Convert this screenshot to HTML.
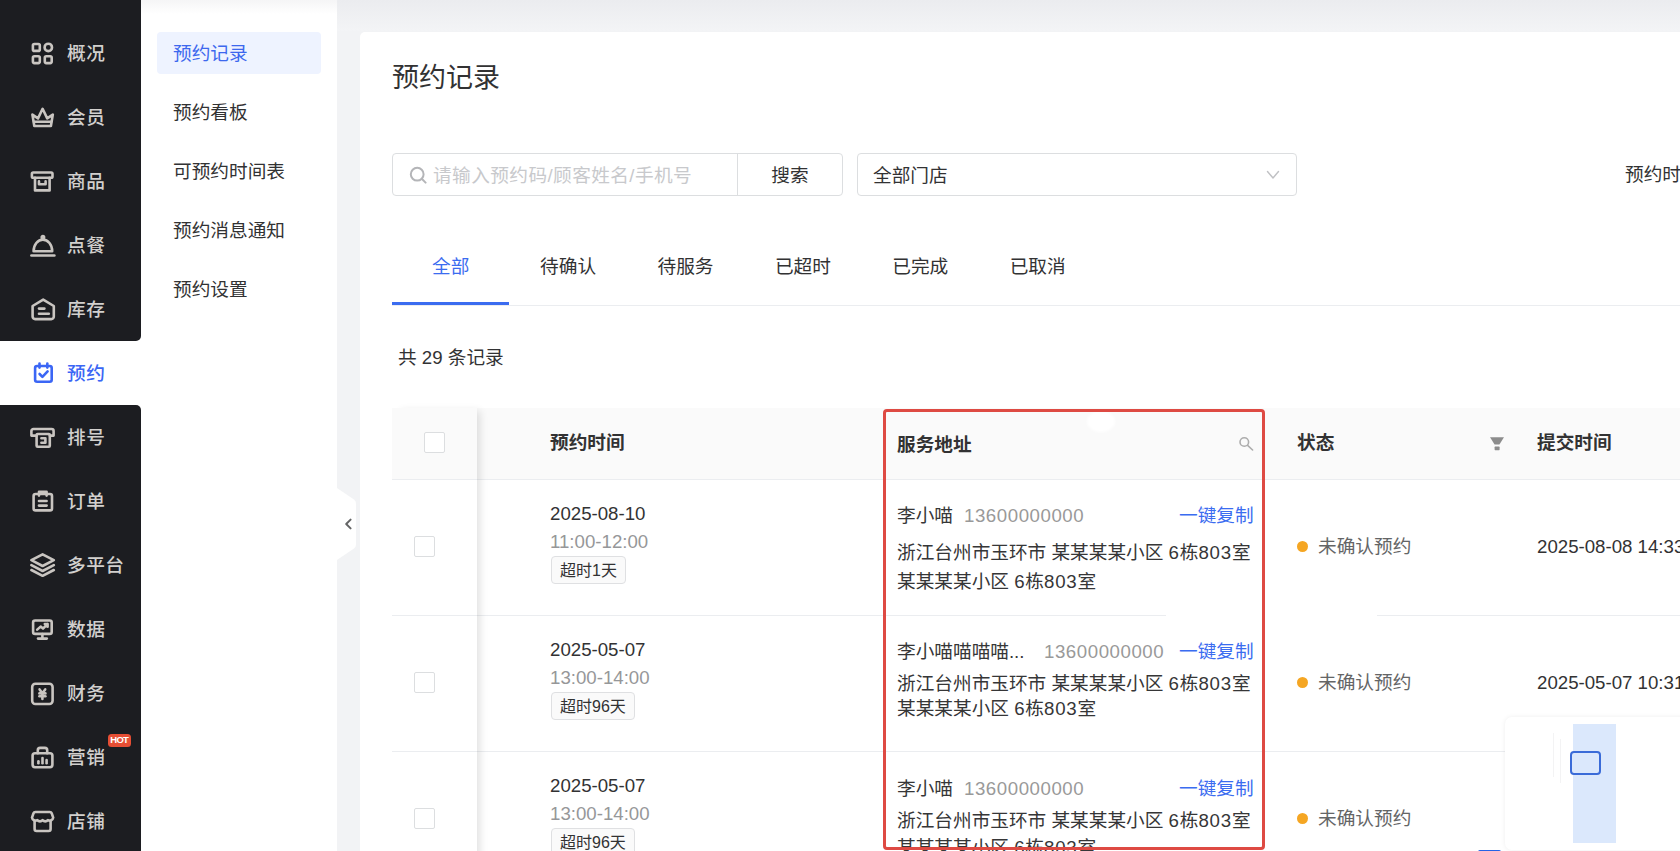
<!DOCTYPE html>
<html lang="zh-CN">
<head>
<meta charset="utf-8">
<title>预约记录</title>
<style>
*{box-sizing:border-box;margin:0;padding:0}
html,body{width:1680px;height:851px;overflow:hidden}
body{position:relative;background:#f2f3f5;font-family:"Liberation Sans","Noto Sans CJK SC",sans-serif;color:#323233;font-size:18.67px}
.abs{position:absolute}
/* primary sidebar */
#s1{position:absolute;left:0;top:0;width:141px;height:851px;background:#fff}
#s1 .dark{position:absolute;left:0;width:141px;background:#1c1d21}
#s1 .it{position:absolute;left:0;width:141px;height:64px;color:#d2d0ce;font-size:18.67px;line-height:66px;padding-left:67px;white-space:nowrap;letter-spacing:.5px;font-weight:500}
#s1 .it svg{position:absolute;left:30px;top:19px;width:26px;height:26px;fill:none;stroke:#c9c5c1;stroke-width:2.6;stroke-linecap:round;stroke-linejoin:round}
#s1 .it.on{color:#3b66f5}
#s1 .it.on svg{stroke:#3b66f5}
#s1 .hot{position:absolute;left:108px;top:734px;width:23px;height:13px;background:#e64e34;color:#fff;font-size:9.5px;font-weight:bold;line-height:12px;text-align:center;border-radius:3.5px;letter-spacing:-.7px;text-indent:-.5px}
/* secondary sidebar */
#s2{position:absolute;left:141px;top:0;width:196px;height:851px;background:linear-gradient(#f5f5f6,#fff 14px)}
#s2 .m{position:absolute;left:16px;width:164px;height:42px;line-height:44px;padding-left:16px;font-size:18.67px;color:#323233;border-radius:4px;white-space:nowrap;letter-spacing:0}
#s2 .m.on{background:#eef3ff;color:#3d68ee}
/* main */
#topbar{position:absolute;left:337px;top:0;width:1343px;height:31px;background:linear-gradient(#ebecef,#f3f4f6)}
#card{position:absolute;left:360px;top:32px;width:1340px;height:840px;background:#fff;border-radius:5px}

#card .title{position:absolute;left:32px;top:28px;font-size:27px;line-height:36px;color:#323233;letter-spacing:0}
.box{position:absolute;border:1px solid #dcdee0;border-radius:4px;background:#fff}
#search{left:392px;top:153px;width:451px;height:43px}
#search .div{position:absolute;left:344px;top:0;width:1px;height:41px;background:#dcdee0}
#search svg{position:absolute;left:16px;top:12px;width:18px;height:18px}
#search .ph{position:absolute;left:40px;top:1px;line-height:41px;color:#c8c9cc;font-size:18.67px;white-space:nowrap;letter-spacing:0.42px}
#search .btn{position:absolute;left:345px;top:1px;width:104px;line-height:41px;text-align:center;color:#323233}
#sel{left:857px;top:153px;width:440px;height:43px}
#sel .v{position:absolute;left:15px;top:1px;line-height:41px;color:#323233}
#sel svg{position:absolute;left:407px;top:13px;width:16px;height:16px}
.tab{position:absolute;top:247px;width:117.4px;height:40px;line-height:40px;text-align:center;color:#323233;font-size:18.67px}
.tab.on{color:#3b6cf0}
#tabline{position:absolute;left:392px;top:305px;width:1300px;height:1px;background:#ebedf0}
#tabink{position:absolute;left:392px;top:302px;width:117px;height:3px;background:#3b6cf0}
#count{position:absolute;left:398px;top:346px;line-height:24px;color:#323233}
/* table */
#thead{position:absolute;left:392px;top:408px;width:1300px;height:71px;background:#fafafa}
.rowline{position:absolute;left:392px;width:1300px;height:1px;background:#ebedf0}
#fixcol{position:absolute;left:392px;top:408px;width:85px;height:460px;box-shadow:6px 0 8px -3px rgba(0,0,0,.12)}
.cb{position:absolute;width:21px;height:21px;border:1px solid #dcdee0;border-radius:2px;background:#fff}
.th{position:absolute;top:431px;line-height:24px;font-weight:bold;color:#323233;white-space:nowrap}
.t1{position:absolute;left:550px;line-height:24px;color:#323233;white-space:nowrap}
.t2{position:absolute;left:550px;line-height:24px;color:#969799;white-space:nowrap}
.tag{position:absolute;left:551px;height:28px;line-height:28px;padding:0 8px;border:1px solid #dfe0e2;border-radius:4px;background:#fafafa;font-size:16px;color:#323233;white-space:nowrap}
.dot{position:absolute;left:1297px;width:11px;height:11px;border-radius:50%;background:#f5a623}
.st{position:absolute;left:1318px;line-height:24px;color:#646566;white-space:nowrap}
.sub{position:absolute;left:1537px;line-height:24px;color:#323233;white-space:nowrap}
/* address column (mock overlay) */
.ad{position:absolute;white-space:nowrap;color:#363637;font-family:"Liberation Sans","Noto Sans CJK SC",sans-serif;font-size:18.67px;line-height:26px}
.ad.g{color:#999;letter-spacing:.55px}
.ad i{font-style:normal;letter-spacing:.8px}
.ad.b{color:#3b6cf0}
#redbox{position:absolute;left:883px;top:409px;width:382px;height:441px;border:3px solid #de4a43;border-radius:4px}
#pop{position:absolute;left:1505px;top:717px;width:200px;height:133px;background:#fff;border-radius:7px;box-shadow:0 0 5px rgba(0,0,0,.07)}
</style>
</head>
<body>
<div id="s1">
  <div class="dark" style="top:0;height:341px;border-bottom-right-radius:5px"></div>
  <div class="dark" style="top:405px;height:446px;border-top-right-radius:5px"></div>
  <div class="it" style="top:21px"><svg viewBox="0 0 26 26"><rect x="2.9" y="4" width="6.9" height="6.9" rx="1.5"/><rect x="2.9" y="16.2" width="6.9" height="6.9" rx="1.5"/><rect x="14.8" y="16.2" width="6.9" height="6.9" rx="1.5"/><circle cx="18.3" cy="7.4" r="3.7"/></svg>概况</div>
  <div class="it" style="top:85px"><svg viewBox="0 0 26 26"><path d="M2.4 10.6 L8 14.4 L12.6 4.8 L17.2 14.4 L22.8 10.6 L20.9 22 H4.3 Z"/><path d="M4 17.8 H21.2"/></svg>会员</div>
  <div class="it" style="top:149px"><svg viewBox="0 0 26 26"><rect x="1.9" y="4.5" width="20.6" height="5.2" rx="1.3"/><path d="M5 9.7 V22.4 H19.6 V9.7"/><path d="M9 13.4 V16.2 H15.6 V13.4"/></svg>商品</div>
  <div class="it" style="top:213px"><svg viewBox="0 0 26 26"><path d="M3.6 19.2 a9.3 11.6 0 0 1 18.6 0 Z"/><circle cx="12.9" cy="5.2" r="1.2"/><path d="M1.4 23.5 H24.4"/></svg>点餐</div>
  <div class="it" style="top:277px"><svg viewBox="0 0 26 26"><path d="M2.6 10 L13.2 3.6 L23.8 10 V20.6 a2.5 2.5 0 0 1 -2.5 2.5 H5.1 a2.5 2.5 0 0 1 -2.5 -2.5 Z"/><path d="M9 12.6 H14.4"/><path d="M9 17.8 H18.8"/></svg>库存</div>
  <div class="it on" style="top:341px"><svg viewBox="0 0 26 26"><rect x="5.1" y="6" width="16.6" height="15.8" rx="2"/><path d="M9.5 3.6 V7.6"/><path d="M17.3 3.6 V7.6"/><path d="M9.6 14 L12.4 16.8 L17.6 11.4"/></svg>预约</div>
  <div class="it" style="top:405px"><svg viewBox="0 0 26 26"><path d="M6.4 11.6 H1.4 V7 a2 2 0 0 1 2 -2 H21.6 a2 2 0 0 1 2 2 V11.6 H19.8"/><rect x="6.6" y="10" width="13.2" height="12.8" rx="1"/><path d="M11.4 14.2 H15.4 V18.8 H11.4"/></svg>排号</div>
  <div class="it" style="top:469px"><svg viewBox="0 0 26 26"><rect x="3.6" y="6" width="18.4" height="16.4" rx="2"/><path d="M9 7.6 V3.8 H16.6 V7.6"/><path d="M9 13 H16.6"/><path d="M9 17.6 H16.6"/></svg>订单</div>
  <div class="it" style="top:533px"><svg viewBox="0 0 26 26"><path d="M12.6 2.4 L23.8 8.2 L12.6 14 L1.4 8.2 Z"/><path d="M1.4 13.2 L12.6 19 L23.8 13.2"/><path d="M1.4 18 L12.6 23.8 L23.8 18"/></svg>多平台</div>
  <div class="it" style="top:597px"><svg viewBox="0 0 26 26"><rect x="3.1" y="4.5" width="18.6" height="13.4" rx="2"/><path d="M12.4 18 V22.4"/><path d="M8 22.6 H16.8"/><path d="M7.2 13.6 L10.6 10.6 L13 12.6 L17.6 8 M14.8 8 H17.6 V10.8"/></svg>数据</div>
  <div class="it" style="top:661px"><svg viewBox="0 0 26 26"><rect x="2.2" y="3.8" width="20.4" height="20.2" rx="3.2"/><path d="M9.6 9.4 L12.4 13.2 L15.2 9.4"/><path d="M12.4 13.2 V19"/><path d="M9.4 13.4 H15.4"/><path d="M9.4 16.2 H15.4"/></svg>财务</div>
  <div class="it" style="top:725px"><svg viewBox="0 0 26 26"><rect x="2.6" y="9.2" width="19.8" height="14" rx="2.4"/><path d="M7.8 9.2 V6.2 a2.3 2.3 0 0 1 2.3 -2.3 h4.8 a2.3 2.3 0 0 1 2.3 2.3 V9.2"/><path d="M8.4 19.2 V17.2"/><path d="M12.5 19.2 V14"/><path d="M16.6 19.2 V16"/></svg>营销</div>
  <div class="it" style="top:789px"><svg viewBox="0 0 26 26"><path d="M5.4 4 H19.8 a2 2 0 0 1 1.9 1.3 L23.2 9.6 a3.6 3.6 0 0 1 -5.3 2.6 a3.6 3.6 0 0 1 -5.3 0 a3.6 3.6 0 0 1 -5.3 0 a3.6 3.6 0 0 1 -5.3 -2.6 L3.5 5.3 A2 2 0 0 1 5.4 4 Z"/><path d="M4.6 13.4 V21 a2 2 0 0 0 2 2 H18.6 a2 2 0 0 0 2 -2 V13.4"/></svg>店铺</div>
  <div class="hot">HOT</div>
</div>
<div id="s2">
  <div class="m on" style="top:32px">预约记录</div>
  <div class="m" style="top:91px">预约看板</div>
  <div class="m" style="top:150px">可预约时间表</div>
  <div class="m" style="top:209px">预约消息通知</div>
  <div class="m" style="top:268px">预约设置</div>
</div>
<div id="topbar"></div>

<div id="card"><div class="title">预约记录</div></div>
<div class="box" id="search">
  <svg viewBox="0 0 18 18" fill="none" stroke="#b4b5b8" stroke-width="2" stroke-linecap="round"><circle cx="8.2" cy="8.2" r="6.4"/><path d="M13 13 L16.6 16.6"/></svg>
  <div class="ph">请输入预约码/顾客姓名/手机号</div>
  <div class="div"></div>
  <div class="btn">搜索</div>
</div>
<div class="box" id="sel">
  <div class="v">全部门店</div>
  <svg viewBox="0 0 16 16" fill="none" stroke="#c0c1c4" stroke-width="1.4" stroke-linecap="round" stroke-linejoin="round"><path d="M2.5 4.5 L8 11 L13.5 4.5"/></svg>
</div>
<div class="abs" style="left:1625px;top:163px;line-height:24px;white-space:nowrap">预约时间：</div>
<div class="tab on" style="left:392.0px">全部</div>
<div class="tab" style="left:509.4px">待确认</div>
<div class="tab" style="left:626.8px">待服务</div>
<div class="tab" style="left:744.2px">已超时</div>
<div class="tab" style="left:861.6px">已完成</div>
<div class="tab" style="left:979.0px">已取消</div>
<div id="tabline"></div><div id="tabink"></div>
<div id="count">共 29 条记录</div>
<div id="thead"></div>
<div class="rowline" style="top:479px"></div>
<div class="rowline" style="top:615px"></div>
<div class="rowline" style="top:751px"></div>
<div id="fixcol"></div>
<div class="cb" style="left:424px;top:432px"></div>
<div class="cb" style="left:414px;top:536px"></div>
<div class="cb" style="left:414px;top:672px"></div>
<div class="cb" style="left:414px;top:808px"></div>
<div class="th" style="left:550px">预约时间</div>
<div class="th" style="left:897px;top:433px">服务地址</div>
<div class="th" style="left:1297px">状态</div>
<div class="th" style="left:1537px">提交时间</div>
<div class="t1" style="top:502px">2025-08-10</div><div class="t2" style="top:530px">11:00-12:00</div><div class="tag" style="top:556px">超时1天</div>
<div class="dot" style="top:541px"></div><div class="st" style="top:535px">未确认预约</div><div class="sub" style="top:535px">2025-08-08 14:33</div>
<div class="t1" style="top:638px">2025-05-07</div><div class="t2" style="top:666px">13:00-14:00</div><div class="tag" style="top:692px">超时96天</div>
<div class="dot" style="top:677px"></div><div class="st" style="top:671px">未确认预约</div><div class="sub" style="top:671px">2025-05-07 10:31</div>
<div class="t1" style="top:774px">2025-05-07</div><div class="t2" style="top:802px">13:00-14:00</div><div class="tag" style="top:828px">超时96天</div>
<div class="dot" style="top:813px"></div><div class="st" style="top:807px">未确认预约</div><div class="sub" style="top:807px">2025-05-07 10:31</div>
<div class="ad" style="left:897px;top:503px">李小喵</div><div class="ad g" style="left:964px;top:503px">13600000000</div><div class="ad b" style="left:1179px;top:503px">一键复制</div>
<div class="ad" style="left:897px;top:540px">浙江台州市玉环市 某某某某小区 <i>6</i>栋<i>803</i>室</div><div class="ad" style="left:897px;top:569px">某某某某小区 <i>6</i>栋<i>803</i>室</div>
<div class="ad" style="left:897px;top:639px">李小喵喵喵喵...</div><div class="ad g" style="left:1044px;top:639px">13600000000</div><div class="ad b" style="left:1179px;top:639px">一键复制</div>
<div class="ad" style="left:897px;top:671px">浙江台州市玉环市 某某某某小区 <i>6</i>栋<i>803</i>室</div><div class="ad" style="left:897px;top:696px">某某某某小区 <i>6</i>栋<i>803</i>室</div>
<div class="ad" style="left:897px;top:776px">李小喵</div><div class="ad g" style="left:964px;top:776px">13600000000</div><div class="ad b" style="left:1179px;top:776px">一键复制</div>
<div class="ad" style="left:897px;top:808px">浙江台州市玉环市 某某某某小区 <i>6</i>栋<i>803</i>室</div><div class="ad" style="left:897px;top:835px">某某某某小区 <i>6</i>栋<i>803</i>室</div>
<div class="abs" style="left:1166px;top:614px;width:211px;height:3px;background:#fff"></div>
<div class="abs" style="left:1087px;top:411px;width:28px;height:21px;border-radius:50%;background:#fff;filter:blur(1.5px)"></div>
<svg class="abs" style="left:1488px;top:435px;width:18px;height:18px" viewBox="0 0 18 18"><path d="M2 2.2 H16 L11.4 9.4 H6.6 Z" fill="#8c8c8c"/><rect x="6.6" y="11.6" width="5" height="3.6" rx=".6" fill="#8c8c8c"/></svg>
<svg class="abs" style="left:1236px;top:434px;width:20px;height:20px" viewBox="0 0 20 20" fill="none" stroke="#adadad" stroke-width="1.6" stroke-linecap="round"><circle cx="8.3" cy="8" r="4.3"/><path d="M11.6 11.4 L16.6 16"/></svg>
<svg class="abs" style="left:337px;top:488px;width:20px;height:72px" viewBox="0 0 20 72"><path d="M0 0 L17 11.5 Q19 13 19 15.5 V56.5 Q19 59 17 60.5 L0 72 Z" fill="#fff"/><path d="M13.6 31.6 L9.2 36 L13.6 40.4" fill="none" stroke="#646566" stroke-width="2" stroke-linecap="round" stroke-linejoin="round"/></svg>
<div id="redbox"></div>
<div id="pop"><div class="abs" style="left:68px;top:7px;width:43px;height:119px;background:#dbe8fc"></div><div class="abs" style="left:65px;top:34px;width:31px;height:24px;border:2px solid #3a6bd8;border-radius:4px;background:#dbe8fc"></div><div class="abs" style="left:48px;top:16px;width:1px;height:44px;background:#f3f3f4"></div><div class="abs" style="left:55px;top:22px;width:1px;height:44px;background:#f3f3f4"></div></div>
<div class="abs" style="left:1478px;top:850px;width:23px;height:3px;background:#2563e6;border-radius:2px 2px 0 0"></div>

</body>
</html>
